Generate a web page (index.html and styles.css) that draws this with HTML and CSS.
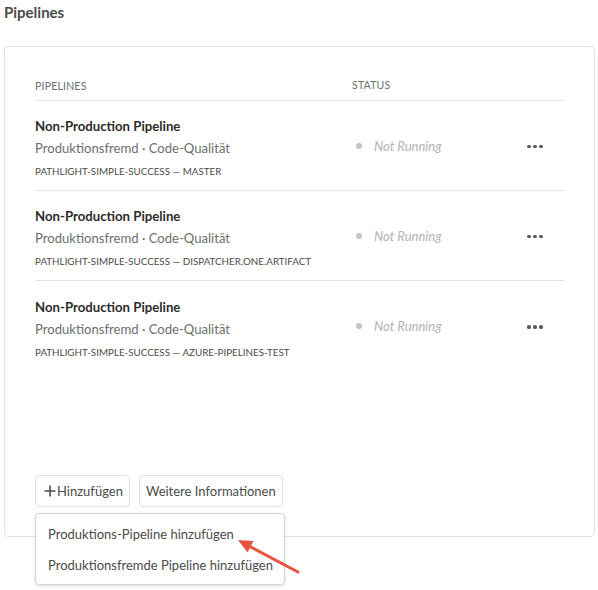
FILE: index.html
```html
<!DOCTYPE html>
<html lang="de">
<head>
<meta charset="utf-8">
<title>Pipelines</title>
<link rel="stylesheet" href="styles.css">
</head>
<body>
<h1 class="page-title">Pipelines</h1>
<section class="card">
  <div class="table">
    <div class="thead">
      <div class="col-name">Pipelines</div>
      <div class="col-status">Status</div>
      <div class="col-actions"></div>
    </div>
    <div class="row">
      <div class="col-name">
        <div class="p-title">Non-Production Pipeline</div>
        <div class="p-sub">Produktionsfremd <span class="sep">·</span> Code-Qualität</div>
        <div class="p-code">PATHLIGHT-SIMPLE-SUCCESS — MASTER</div>
      </div>
      <div class="col-status"><span class="dot"></span><span class="status">Not Running</span></div>
      <div class="col-actions"><span class="more"><i></i><i></i><i></i></span></div>
    </div>
    <div class="row">
      <div class="col-name">
        <div class="p-title">Non-Production Pipeline</div>
        <div class="p-sub">Produktionsfremd <span class="sep">·</span> Code-Qualität</div>
        <div class="p-code">PATHLIGHT-SIMPLE-SUCCESS — DISPATCHER.ONE.ARTIFACT</div>
      </div>
      <div class="col-status"><span class="dot"></span><span class="status">Not Running</span></div>
      <div class="col-actions"><span class="more"><i></i><i></i><i></i></span></div>
    </div>
    <div class="row last">
      <div class="col-name">
        <div class="p-title">Non-Production Pipeline</div>
        <div class="p-sub">Produktionsfremd <span class="sep">·</span> Code-Qualität</div>
        <div class="p-code">PATHLIGHT-SIMPLE-SUCCESS — AZURE-PIPELINES-TEST</div>
      </div>
      <div class="col-status"><span class="dot"></span><span class="status">Not Running</span></div>
      <div class="col-actions"><span class="more"><i></i><i></i><i></i></span></div>
    </div>
  </div>
  <div class="actions">
    <button class="btn"><svg class="plus" width="12" height="12" viewBox="0 0 12 12"><path d="M6 0.5V11.5M0.5 6H11.5" stroke="#4b4b4b" stroke-width="1.6"/></svg>Hinzufügen</button>
    <button class="btn">Weitere Informationen</button>
    <div class="menu">
      <div class="menu-item">Produktions-Pipeline hinzufügen</div>
      <div class="menu-item">Produktionsfremde Pipeline hinzufügen</div>
    </div>
    <svg class="arrow" width="70" height="45" viewBox="0 0 70 45">
      <line x1="64" y1="38" x2="13" y2="11" stroke="#e8553f" stroke-width="3" stroke-linecap="round"/>
      <polygon points="4,6 19.5,7 13.5,18.5" fill="#e8553f"/>
    </svg>
  </div>
</section>
</body>
</html>
```

FILE: styles.css
```css
* { box-sizing: border-box; }
html, body { margin: 0; padding: 0; background: #fff; }
body {
  font-family: "Lato", "Open Sans", sans-serif;
  color: #4b4b4b;
  width: 598px;
  height: 590px;
  overflow: hidden;
}
.page-title {
  margin: 0;
  padding: 3px 4px 0;
  font-size: 15px;
  font-weight: 700;
  line-height: 18px;
  color: #4b4b4b;
}
.card {
  margin: 25px 3px 0 4px;
  height: 491px;
  border: 1px solid #e3e3e3;
  border-radius: 4px;
  padding: 20px 29px 29px 30px;
  display: flex;
  flex-direction: column;
}
.table { display: flex; flex-direction: column; }
.thead, .row {
  display: grid;
  grid-template-columns: 317px 1fr 38px;
}
.thead {
  height: 34px;
  align-items: center;
  font-size: 10.5px;
  letter-spacing: 0.2px;
  text-transform: uppercase;
  color: #6e6e6e;
  border-bottom: 1px solid #e6e6e6;
  padding-top: 2px;
}
.row {
  height: 90px;
  align-items: center;
  border-bottom: 1px solid #e6e6e6;
}
.row.last { border-bottom: none; }
.col-name { padding-top: 2px; }
.p-title {
  font-size: 13.2px;
  font-weight: 700;
  color: #2c2c2c;
  line-height: 18px;
  margin-top: 2px;
}
.p-sub {
  font-size: 13.1px;
  color: #6e6e6e;
  line-height: 18px;
  margin-top: 4px;
}
.sep { color: #6e6e6e; }
.p-code {
  font-size: 9.8px;
  color: #4b4b4b;
  line-height: 14px;
  margin-top: 7px;
}
.row .col-status {
  display: flex;
  align-items: center;
  padding-left: 4px;
}
.dot {
  width: 6px;
  height: 6px;
  border-radius: 50%;
  background: #c4c4c4;
  margin-right: 12px;
}
.status {
  font-style: italic;
  font-size: 13px;
  color: #b3b3b3;
}
.col-actions { display: flex; align-items: center; margin-top: 2px; }
.more { display: flex; gap: 2.5px; }
.more i {
  display: block;
  width: 3.7px;
  height: 3.7px;
  border-radius: 50%;
  background: #5a5a5a;
}
.actions {
  position: relative;
  margin-top: auto;
  display: flex;
  gap: 9px;
}
.btn {
  height: 32px;
  border: 1px solid #e1e1e1;
  border-radius: 4px;
  background: #fff;
  font-family: inherit;
  font-size: 13px;
  color: #4b4b4b;
  padding: 0 6px;
  display: flex;
  align-items: center;
}
.plus { margin: 0 1px 0 2px; }
.menu {
  position: absolute;
  left: 0;
  top: 38px;
  width: 250px;
  height: 72px;
  background: #fff;
  border: 1px solid #d6d6d6;
  border-radius: 4px;
  box-shadow: 0 1px 3px rgba(0,0,0,0.15);
  padding: 5px 0;
  z-index: 2;
}
.menu-item {
  height: 31px;
  line-height: 31px;
  padding-left: 12px;
  font-size: 13px;
  color: #4b4b4b;
  white-space: nowrap;
}
.arrow {
  position: absolute;
  left: 199px;
  top: 59px;
  z-index: 3;
}
```
